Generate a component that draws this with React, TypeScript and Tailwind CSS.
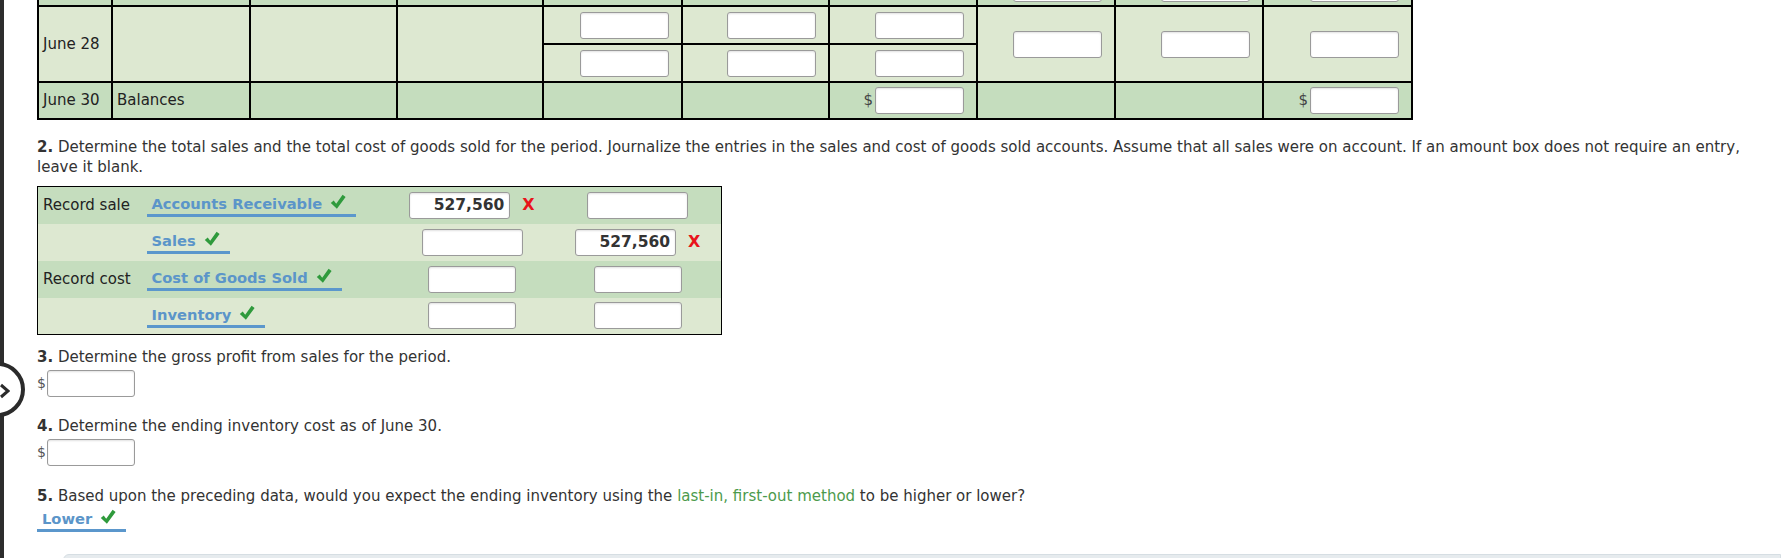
import React from 'react';

const DARK = 'bg-[#c5ddbe]';
const LIGHT = 'bg-[#dde8d1]';

function Box({ w = 'w-[89px]', value }: { w?: string; value?: string }) {
  return (
    <span
      className={`inline-block h-[27px] ${w} align-middle rounded-[3px] border border-[#9a9a9a] bg-white shadow-[inset_0_1px_2px_rgba(0,0,0,0.12)] text-right pr-[5px] text-[15.5px] leading-[25px] font-bold text-[#333]`}
    >
      {value}
    </span>
  );
}

function Check() {
  return (
    <svg width="16" height="16" viewBox="0 0 16 16" className="inline-block align-[-1px]">
      <path d="M0.8 8.9 L3.7 6.5 L6.2 9.8 L12.6 0.8 L15.6 3 L6.9 14.8 Z" fill="#2f9a3c" />
    </svg>
  );
}

function Cross() {
  return <span className="ml-[12px] text-[16px] font-bold text-[#e8141b] align-middle">X</span>;
}

function Account({ name }: { name: string }) {
  return (
    <span className="inline-block border-b-[3px] border-[#5b97cc] pl-[5px] pr-[10px] leading-[20px] text-[14.7px] font-bold text-[#5b95c9]">
      {name}
      <span className="ml-[8px]">
        <Check />
      </span>
    </span>
  );
}

// top ledger table, first row is scrolled mostly out of view
function Ledger() {
  const td = 'border-2 border-black p-0';
  const inp = `${td} text-right pr-[12px]`;
  return (
    <table className="table-fixed border-collapse -mt-[31px] text-[15px] text-[#222]">
      <colgroup>
        {[74, 138, 147, 146, 139, 147, 148, 138, 148, 149].map((w, i) => (
          <col key={i} style={{ width: w }} />
        ))}
      </colgroup>
      <tbody>
        <tr className={`h-[36px] ${DARK}`}>
          <td className={td} />
          <td className={td} />
          <td className={td} />
          <td className={td} />
          <td className={td} />
          <td className={td} />
          <td className={td} />
          <td className={inp}><Box /></td>
          <td className={inp}><Box /></td>
          <td className={inp}><Box /></td>
        </tr>
        <tr className={`h-[38px] ${LIGHT}`}>
          <td rowSpan={2} className={`${td} pl-[4px]`}>June 28</td>
          <td rowSpan={2} className={td} />
          <td rowSpan={2} className={td} />
          <td rowSpan={2} className={td} />
          <td className={inp}><Box /></td>
          <td className={inp}><Box /></td>
          <td className={inp}><Box /></td>
          <td rowSpan={2} className={inp}><Box /></td>
          <td rowSpan={2} className={inp}><Box /></td>
          <td rowSpan={2} className={inp}><Box /></td>
        </tr>
        <tr className={`h-[38px] ${LIGHT}`}>
          <td className={inp}><Box /></td>
          <td className={inp}><Box /></td>
          <td className={inp}><Box /></td>
        </tr>
        <tr className={`h-[37px] ${DARK}`}>
          <td className={`${td} pl-[4px]`}>June 30</td>
          <td className={`${td} pl-[4px]`}>Balances</td>
          <td className={td} />
          <td className={td} />
          <td className={td} />
          <td className={td} />
          <td className={inp}>
            <span className="mr-[2px] text-[#444]">$</span>
            <Box />
          </td>
          <td className={td} />
          <td className={td} />
          <td className={inp}>
            <span className="mr-[2px] text-[#444]">$</span>
            <Box />
          </td>
        </tr>
      </tbody>
    </table>
  );
}

function Journal() {
  const rows = [
    { label: 'Record sale', acct: 'Accounts Receivable', bg: DARK, w: 'w-[101px]', dr: '527,560', cr: '', drX: true, crX: false },
    { label: '', acct: 'Sales', bg: LIGHT, w: 'w-[101px]', dr: '', cr: '527,560', drX: false, crX: true },
    { label: 'Record cost', acct: 'Cost of Goods Sold', bg: DARK, w: 'w-[88px]', dr: '', cr: '', drX: false, crX: false },
    { label: '', acct: 'Inventory', bg: LIGHT, w: 'w-[88px]', dr: '', cr: '', drX: false, crX: false },
  ];
  return (
    <table className="mt-[9px] table-fixed border-collapse border border-black text-[15px] text-[#222]">
      <colgroup>
        <col style={{ width: 109 }} />
        <col style={{ width: 253 }} />
        <col style={{ width: 145 }} />
        <col style={{ width: 177 }} />
      </colgroup>
      <tbody>
        {rows.map((r, i) => (
          <tr key={i} className={`h-[37px] ${r.bg}`}>
            <td className="p-0 pl-[5px]">{r.label}</td>
            <td className="p-0">
              <Account name={r.acct} />
            </td>
            <td className="p-0 text-center">
              <Box w={r.w} value={r.dr} />
              {r.drX && <Cross />}
            </td>
            <td className="p-0 pl-[10px] text-center">
              <Box w={r.w} value={r.cr} />
              {r.crX && <Cross />}
            </td>
          </tr>
        ))}
      </tbody>
    </table>
  );
}

function Dollar() {
  return (
    <div className="mt-[1px] flex items-center">
      <span className="w-[10px] text-[14px] text-[#555]">$</span>
      <Box w="w-[88px]" />
    </div>
  );
}

export default function App() {
  return (
    <div className="relative h-[558px] overflow-hidden bg-white font-['DejaVu_Sans',Verdana,sans-serif] text-[#333]">
      <div className="flex h-full">
        <div className="w-[4px] shrink-0 bg-[#2d2d2d]" />
        <div className="pl-[33px] pt-0">
          <Ledger />

          <p className="mt-[17px] w-[1730px] text-[15px] leading-[20px]">
            <b>2.</b> Determine the total sales and the total cost of goods sold for the period. Journalize the entries in the
            sales and cost of goods sold accounts. Assume that all sales were on account. If an amount box does not require
            an entry, leave it blank.
          </p>

          <Journal />

          <p className="mt-[10px] text-[15px] leading-[24px]">
            <b>3.</b> Determine the gross profit from sales for the period.
          </p>
          <Dollar />

          <p className="mt-[17px] text-[15px] leading-[24px]">
            <b>4.</b> Determine the ending inventory cost as of June 30.
          </p>
          <Dollar />

          <p className="mt-[18px] text-[15px] leading-[24px]">
            <b>5.</b> Based upon the preceding data, would you expect the ending inventory using the{' '}
            <span className="text-[#4c9a4c]">last-in, first-out method</span> to be higher or lower?
          </p>
          <div className="-mt-[1px]">
            <Account name="Lower" />
          </div>

          <div className="ml-[26px] mt-[22px] h-[40px] w-[1718px] rounded-tl-[6px] border border-[#d6dee3] bg-[#e6ebee]" />
        </div>
      </div>

      {/* side drawer toggle */}
      <div className="absolute left-[-30px] top-[362px] h-[55px] w-[55px] rounded-full border-[4px] border-[#2b2b2b] bg-white" />
      <svg className="absolute left-0 top-[383px]" width="10" height="16" viewBox="0 0 10 16">
        <path d="M1 2 L8 8 L1 14" fill="none" stroke="#2b2b2b" strokeWidth="3" />
      </svg>
    </div>
  );
}
